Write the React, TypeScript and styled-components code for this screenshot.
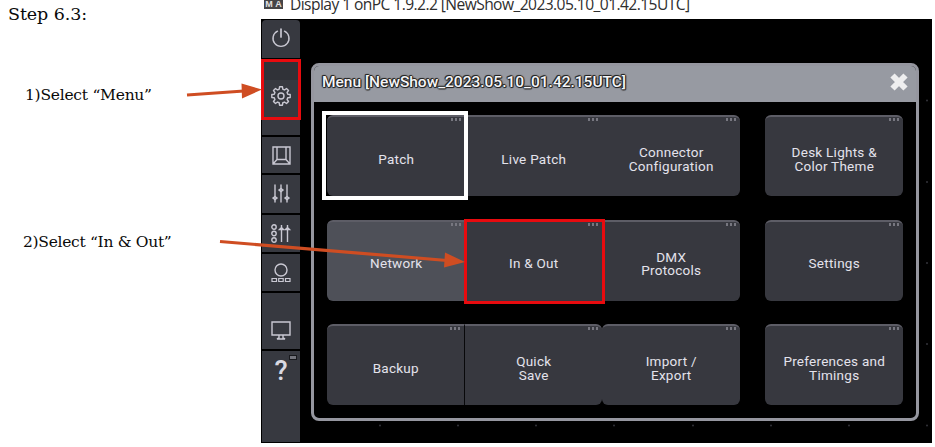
import React from "react";
import styled, { createGlobalStyle, css } from "styled-components";

const GlobalStyle = createGlobalStyle`
  * { box-sizing: border-box; }
  body { margin: 0; background: #fff; overflow: hidden; }
`;

const Page = styled.main`
  position: relative;
  display: grid;
  grid-template-columns: 261px 671px;
  width: 935px;
  height: 447px;
  overflow: hidden;
  background: #fff;
`;

const Notes = styled.section`
  display: flex;
  flex-direction: column;
  color: #0a0a0a;
  font-family: Rockwell, "DejaVu Serif", serif;
  white-space: nowrap;
`;

const Heading = styled.h1`
  margin: 3px 0 0 8px;
  height: 22px;
  font-size: 17.5px;
  font-weight: 400;
  line-height: 22px;
  letter-spacing: -0.1px;
`;

const Note = styled.p<{ $top: number; $left: number; $spacing: number }>`
  margin: ${(p) => p.$top}px 0 0 ${(p) => p.$left}px;
  height: 20px;
  font-size: 15.5px;
  line-height: 20px;
  letter-spacing: ${(p) => p.$spacing}px;
`;

const Window = styled.section`
  display: flex;
  flex-direction: column;
  height: 443px;
  min-width: 0;
`;

const TitleBar = styled.header`
  display: flex;
  flex: none;
  align-items: flex-start;
  gap: 7px;
  height: 19px;
  padding-left: 3px;
  color: #2e2e2e;
  font: 15.6px/20px "Open Sans", sans-serif;
  white-space: nowrap;
`;

const AppMark = styled.span`
  display: flex;
  width: 19px;
  height: 9px;
  justify-content: space-around;
  align-items: flex-end;
  background: #454547;
  color: #e2e2e2;
  font: bold 9px/9px "Liberation Sans", sans-serif;
`;

const Title = styled.span`
  height: 20px;
  margin-top: -6px;
  letter-spacing: -0.57px;
`;

const Console = styled.div`
  display: flex;
  height: 424px;
  background: #000;
`;

const Sidebar = styled.nav`
  display: flex;
  flex-direction: column;
  gap: 2px;
  width: 39px;
  padding: 1px 0 1px 1px;
`;

const Tool = styled.div<{ $height?: number; $pad: number; $first?: boolean }>`
  display: flex;
  justify-content: center;
  align-items: flex-start;
  flex: ${(p) => (p.$height ? `0 0 ${p.$height}px` : "1")};
  padding-top: ${(p) => p.$pad}px;
  background: #373940;
  border-radius: ${(p) => (p.$first ? "4px 4px 0 0" : "0")};
  svg { display: block; flex: none; overflow: visible; }
`;

const SelectedTool = styled.div`
  display: flex;
  flex: none;
  flex-direction: column;
  justify-content: flex-end;
  align-items: center;
  height: 61px;
  width: 40px;
  margin: -1px 0 -2px -1px;
  padding-bottom: 11px;
  border: 3px solid #e80b0f;
  background: linear-gradient(#303238 18px, #373940 18px);
  svg { display: block; overflow: visible; }
`;

const Workspace = styled.div`
  position: relative;
  flex: 1;
  padding: 44px 0 0 11px;
`;

const Panel = styled.section`
  width: 608px;
  height: 358px;
  border: 3px solid #95969f;
  border-radius: 8px;
  overflow: hidden;
  background: #000;
`;

const PanelHeader = styled.header`
  display: flex;
  justify-content: space-between;
  height: 36px;
  padding: 5px 8px 0;
  background: #979aa2;
  color: #f5f5f7;
  font: 500 15.5px/22px Roboto, sans-serif;
  letter-spacing: -0.01px;
  text-shadow: 1px 0 1px #222, -1px 0 1px #222, 0 1px 1px #222, 0 -1px 1px #222, 1px 1px 0 #444, -1px -1px 0 #444;
  svg { display: block; margin: 2px 0 0; }
`;

const Grid = styled.div`
  display: grid;
  grid-template-columns: repeat(4, 137.5px);
  grid-template-rows: repeat(3, 81px);
  row-gap: 23.5px;
  padding: 13px 0 0 13px;
  & > :nth-child(4n) { margin-left: 25.5px; margin-right: -25.5px; }
`;

type Mark = "white" | "red";

const MenuButton = styled.button<{ $corners: string; $light?: boolean; $line?: boolean }>`
  position: relative;
  display: flex;
  align-items: center;
  justify-content: center;
  margin: 0;
  padding: 6px 0 0 1px;
  border: 0;
  border-top: 2px solid #5d5d66;
  border-right: ${(p) => (p.$line ? "1px solid #08080a" : "0")};
  border-radius: ${(p) => p.$corners};
  background: ${(p) => (p.$light ? "#4e5058" : "#37383f")};
  color: #e4e3ec;
  font: 13.5px/13.5px Roboto, sans-serif;
  letter-spacing: 0.26px;
  text-align: center;
  white-space: pre-line;
`;

const Dots = styled.span`
  position: absolute;
  top: 1px;
  right: 4px;
  display: flex;
  gap: 2px;
  i { width: 2px; height: 3px; background: #777780; }
`;

const Outline = styled.span<{ $kind: Mark }>`
  position: absolute;
  z-index: 1;
  ${(p) =>
    p.$kind === "white"
      ? css`inset: -6px -3.5px -4px -5px; border: 4px solid #fff;`
      : css`inset: -3px -2.5px -3px -0.5px; border: 3px solid #e80b0f;`}
`;

const DeskGrid = styled.svg`
  position: absolute;
  inset: 0;
  width: 100%;
  height: 100%;
  pointer-events: none;
`;

const Arrows = styled.svg`
  position: absolute;
  inset: 0;
  z-index: 2;
  pointer-events: none;
`;

interface Item {
  label: string;
  corners: string;
  light?: boolean;
  line?: boolean;
  mark?: Mark;
}

const ALL = "6px";
const LEFT = "6px 0 0 6px";
const RIGHT = "0 6px 6px 0";

const items: Item[] = [
  { label: "Patch", corners: LEFT, mark: "white" },
  { label: "Live Patch", corners: "0" },
  { label: "Connector\nConfiguration", corners: RIGHT },
  { label: "Desk Lights &\nColor Theme", corners: ALL },
  { label: "Network", corners: LEFT, light: true },
  { label: "In & Out", corners: "0", mark: "red" },
  { label: "DMX\nProtocols", corners: RIGHT },
  { label: "Settings", corners: ALL },
  { label: "Backup", corners: LEFT, line: true },
  { label: "Quick\nSave", corners: RIGHT },
  { label: "Import /\nExport", corners: ALL },
  { label: "Preferences and\nTimings", corners: ALL },
];

const stroke = { fill: "none", stroke: "#c9c8d2", strokeWidth: 1.4 } as const;

const PowerIcon = () => (
  <svg width="20" height="20" viewBox="0 0 20 20" {...stroke} strokeLinecap="round">
    <path d="M6.5 3.2A8 8 0 1 0 13.5 3.2" />
    <path d="M10 1v8" strokeWidth="1.7" />
  </svg>
);

const gearPath = (() => {
  const pts: string[] = [];
  for (let i = 0; i < 8; i++) {
    [[-15, 7], [-9, 9.3], [9, 9.3], [15, 7]].forEach(([deg, r]) => {
      const a = ((i * 45 + deg) * Math.PI) / 180;
      pts.push(`${(10 + r * Math.sin(a)).toFixed(2)} ${(10 - r * Math.cos(a)).toFixed(2)}`);
    });
  }
  return `M${pts.join("L")}Z`;
})();

const GearIcon = () => (
  <svg width="20" height="20" viewBox="0 0 20 20" {...stroke} strokeLinejoin="round">
    <path d={gearPath} />
    <circle cx="10" cy="10" r="3" />
  </svg>
);

const StageIcon = () => (
  <svg width="19" height="19" viewBox="0 0 19 19" {...stroke}>
    <path d="M1 1h17v17H1zM5 1v12.500h9V1M1 18l4-4.500M18 18l-4-4.500" />
  </svg>
);

const FadersIcon = () => (
  <svg width="18" height="20" viewBox="0 0 18 20" {...stroke} strokeLinecap="round">
    <path d="M3 1v17M9 1v17M15 1v17" />
    <path d="M1 14l2-1.500 2 1.500-2 1.500zM7 6l2-1.500L11 6 9 7.500zM13 14l2-1.500 2 1.500-2 1.500z" />
  </svg>
);

const EncodersIcon = () => (
  <svg width="20" height="20" viewBox="0 0 20 20" {...stroke}>
    <circle cx="3" cy="3" r="2.200" />
    <circle cx="3" cy="9.500" r="2.200" />
    <circle cx="3" cy="16" r="2.200" />
    <path d="M10.500 1v17M16.500 1v17M8.500 5.500l2-2 2 2zM14.500 5.500l2-2 2 2z" />
  </svg>
);

const DialIcon = () => (
  <svg width="20" height="20" viewBox="0 0 20 20" {...stroke}>
    <circle cx="10" cy="7" r="6" />
    <path d="M1 15.500h4.500v3H1zM7.700 15.500h4.500v3H7.700zM14.500 15.500H19v3h-4.500z" strokeWidth="1.200" />
  </svg>
);

const MonitorIcon = () => (
  <svg width="20" height="19" viewBox="0 0 20 19" {...stroke}>
    <path d="M1 1h18v13H1zM8 14v3l-2 1h8l-2-1v-3" />
  </svg>
);

const HelpMark = styled.span`
  position: relative;
  width: 100%;
  color: #dad9e2;
  font: 500 27px/28px Roboto, sans-serif;
  text-align: center;
  &::after {
    content: "";
    position: absolute;
    top: -2px;
    right: 3px;
    width: 6px;
    height: 3px;
    border: 1px solid #18191d;
    background: #74757d;
    box-sizing: content-box;
  }
`;

export default function App() {
  return (
    <Page>
      <GlobalStyle />
      <Notes>
        <Heading>Step 6.3:</Heading>
        <Note $top={60} $left={25} $spacing={-0.25}>1)Select “Menu”</Note>
        <Note $top={127} $left={23} $spacing={-0.3}>2)Select “In &amp; Out”</Note>
      </Notes>
      <Window>
        <TitleBar>
          <AppMark><span>M</span><span>A</span></AppMark>
          <Title>Display 1 onPC 1.9.2.2 [NewShow_2023.05.10_01.42.15UTC]</Title>
        </TitleBar>
        <Console>
          <Sidebar>
            <Tool $height={38} $pad={8} $first><PowerIcon /></Tool>
            <SelectedTool><GearIcon /></SelectedTool>
            <Tool $height={15} $pad={0} />
            <Tool $height={36} $pad={9}><StageIcon /></Tool>
            <Tool $height={38} $pad={9}><FadersIcon /></Tool>
            <Tool $height={36.5} $pad={9}><EncodersIcon /></Tool>
            <Tool $height={37} $pad={9}><DialIcon /></Tool>
            <Tool $height={56.5} $pad={28}><MonitorIcon /></Tool>
            <Tool $pad={6}><HelpMark>?</HelpMark></Tool>
          </Sidebar>
          <Workspace>
            <DeskGrid fill="#33333a">
              {[80, 158, 236, 314, 393, 471, 549, 627].map((x) => (
                <circle key={x} cx={x} cy="406.500" r="1" />
              ))}
              {[81.5, 163, 244, 325].map((y) => (
                <circle key={y} cx="627" cy={y} r="1" />
              ))}
            </DeskGrid>
            <Panel>
              <PanelHeader>
                <span>Menu [NewShow_2023.05.10_01.42.15UTC]</span>
                <svg width="18" height="18" viewBox="0 0 18 18" fill="none" stroke="#eeeeef" strokeWidth="6">
                  <path d="M2.500 2.500l13 13M15.500 2.500l-13 13" />
                </svg>
              </PanelHeader>
              <Grid>
                {items.map((item) => (
                  <MenuButton key={item.label} $corners={item.corners} $light={item.light} $line={item.line}>
                    {item.label}
                    <Dots><i /><i /><i /></Dots>
                    {item.mark && <Outline $kind={item.mark} />}
                  </MenuButton>
                ))}
              </Grid>
            </Panel>
          </Workspace>
        </Console>
      </Window>
      <Arrows width="935" height="447" fill="#cf4d22" stroke="#cf4d22">
        <path d="M187 95L244 91M220 241.500L447 260.500" strokeWidth="3.200" />
        <path d="M241.500 83.500L262 89.500L242 98.500ZM445 252.500L465 262L444 267.500Z" stroke="none" />
      </Arrows>
    </Page>
  );
}
